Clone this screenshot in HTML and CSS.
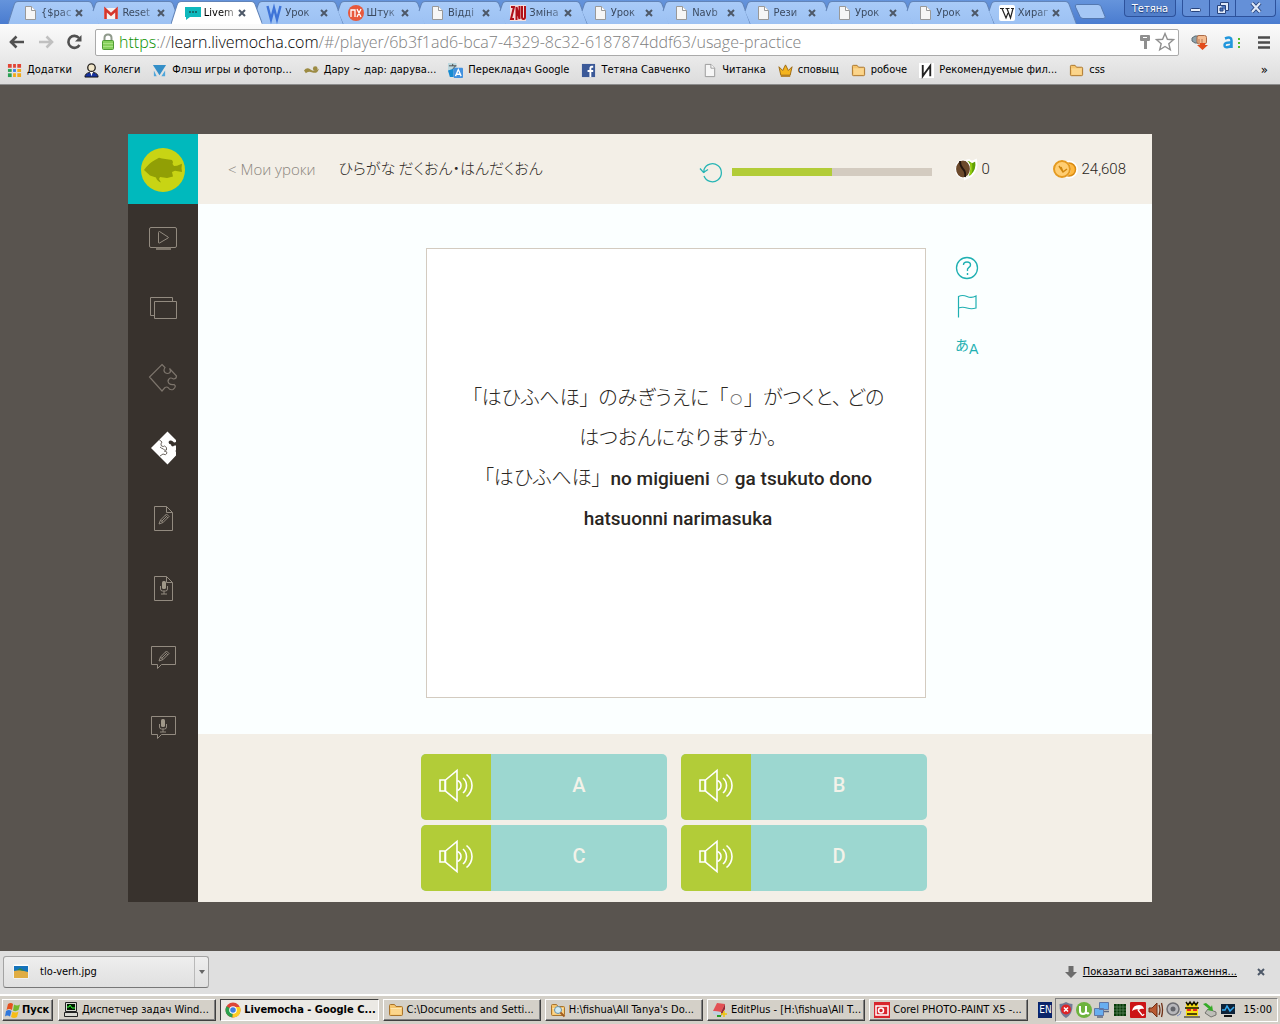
FILE: index.html
```html
<!DOCTYPE html>
<html lang="uk">
<head>
<meta charset="utf-8">
<title>Livemocha</title>
<link rel="stylesheet" href="styles.css">
</head>
<body>
<svg class="defs" width="0" height="0" aria-hidden="true">
  <defs>
    <linearGradient id="tabfill" x1="0" y1="0" x2="0" y2="1"><stop offset="0" stop-color="#a9cbf8"/><stop offset="1" stop-color="#9cc1f3"/></linearGradient>
    <symbol id="tab-first" viewBox="0 0 91 24" preserveAspectRatio="none"><path d="M0 24 L6 5 Q7 1.500 10 1.500 H80 Q83 1.500 84 5 L91 24Z" fill="url(#tabfill)"/><path d="M0 24 L6 5 Q7 1.500 10 1.500 H80 Q83 1.500 84 5 L91 24" fill="none" stroke="#6284b8"/></symbol>
    <symbol id="tab-next" viewBox="0 0 91 24" preserveAspectRatio="none"><path d="M9.500 24 L4 11 L6 5 Q7 1.500 10 1.500 H80 Q83 1.500 84 5 L91 24Z" fill="url(#tabfill)"/><path d="M4 11 L6 5 Q7 1.500 10 1.500 H80 Q83 1.500 84 5 L91 24" fill="none" stroke="#6284b8"/></symbol>
    <symbol id="tab-active" viewBox="0 0 91 24" preserveAspectRatio="none"><path d="M0 24 L6 5 Q7 1.500 10 1.500 H80 Q83 1.500 84 5 L91 24" fill="#fff" stroke="#6284b8"/></symbol>
    <symbol id="page" viewBox="0 0 16 16"><path d="M3.500 1.500h6l4 4v9h-10z" fill="#f6f6f6" stroke="#999"/><path d="M9.500 1.500v4h4" fill="#fff" stroke="#999"/></symbol>
    <symbol id="close" viewBox="0 0 8 8"><path d="M1 1l6 6M7 1l-6 6" stroke="#4d5868" stroke-width="2" fill="none"/></symbol>
    <symbol id="folder" viewBox="0 0 16 16"><path d="M1.500 3.500q0-1 1-1h4l1.500 2h5.500q1 0 1 1v7q0 1-1 1h-11q-1 0-1-1z" fill="#f6c56d" stroke="#a9742c"/><path d="M2.500 6.500h11" stroke="#ffe6ae"/><path d="M3 7h10.500v5.500H3z" fill="#fbd58c"/></symbol>
    <symbol id="speaker" viewBox="0 0 36 36"><g fill="none" stroke="#fff" stroke-width="1.600"><path d="M2 13h5v11H2zM7.500 13L19 3.500v30L7.500 24z"/><path d="M19.500 13.500q3.500 1.500 3.500 5t-3.500 5M25 11q3.500 3 3.500 7.500T25 26M28.500 7.500Q34 12 34 18.500T28.500 29.500"/></g></symbol>
    <symbol id="pencil" viewBox="0 0 12 12"><path d="M1 11l1.500-4 6-6 2.500 2.500-6 6zM2.500 7L5 9.500M7.500 2.500L10 5M3.500 8.500l5-5" fill="none" stroke="#938b80"/></symbol>
    <symbol id="mic" viewBox="0 0 12 14"><rect x="4" y="0" width="4" height="8" rx="1.500" fill="#a09889"/><path d="M2.500 5v3q0 2 2 2h3q2 0 2-2V5M6 10v3M3 13h6" fill="none" stroke="#938b80"/></symbol>
  </defs>
</svg>

<header class="chrome">
  <div class="titlebar">
    <div class="tabs">
      <div class="tab"><svg class="shape"><use href="#tab-first"/></svg><svg class="ico"><use href="#page"/></svg><button class="name">{$pac</button><button class="x" aria-label="Закрити"><svg><use href="#close"/></svg></button></div>
      <div class="tab"><svg class="shape"><use href="#tab-next"/></svg><svg class="ico" viewBox="0 0 16 16"><path d="M1 3h14v11H1z" fill="#f5f1ee"/><path d="M2.500 14V4.500L8 9.500l5.500-5V14" fill="none" stroke="#d5362c" stroke-width="2.600"/></svg><button class="name">Reset</button><button class="x" aria-label="Закрити"><svg><use href="#close"/></svg></button></div>
      <div class="tab active"><svg class="shape"><use href="#tab-active"/></svg><svg class="ico" viewBox="0 0 16 16"><path d="M0 2h16v10H5l-4 3v-3H0z" fill="#0fb9bd"/><path d="M4 7h2M7 7h2M10 7h2" stroke="#1a5458" stroke-width="1.500"/></svg><button class="name">Livem</button><button class="x" aria-label="Закрити"><svg><use href="#close"/></svg></button></div>
      <div class="tab"><svg class="shape"><use href="#tab-next"/></svg><svg class="ico" viewBox="0 0 16 16"><path d="M1.500 1L5 14.500 8 3l3 11.500L14.500 1" fill="none" stroke="#3f74d8" stroke-width="2.400"/></svg><button class="name">Урок</button><button class="x" aria-label="Закрити"><svg><use href="#close"/></svg></button></div>
      <div class="tab"><svg class="shape"><use href="#tab-next"/></svg><svg class="ico" viewBox="0 0 16 16"><circle cx="8" cy="8" r="8" fill="#e8583c"/><path d="M3 12V5h4v7M9 4l4 8M13 4l-4 8" fill="none" stroke="#fff" stroke-width="1.300"/></svg><button class="name">Штук</button><button class="x" aria-label="Закрити"><svg><use href="#close"/></svg></button></div>
      <div class="tab"><svg class="shape"><use href="#tab-next"/></svg><svg class="ico"><use href="#page"/></svg><button class="name">Відді</button><button class="x" aria-label="Закрити"><svg><use href="#close"/></svg></button></div>
      <div class="tab"><svg class="shape"><use href="#tab-next"/></svg><svg class="ico" viewBox="0 0 16 16"><path d="M0 0h16v16H0z" fill="#f3dede"/><path d="M1 2h3L1 14h3M6.500 15V2l3 12V1M12 1v11q0 2 1.500 2t1.500-2V1" fill="none" stroke="#b01019" stroke-width="2"/></svg><button class="name">Зміна</button><button class="x" aria-label="Закрити"><svg><use href="#close"/></svg></button></div>
      <div class="tab"><svg class="shape"><use href="#tab-next"/></svg><svg class="ico"><use href="#page"/></svg><button class="name">Урок</button><button class="x" aria-label="Закрити"><svg><use href="#close"/></svg></button></div>
      <div class="tab"><svg class="shape"><use href="#tab-next"/></svg><svg class="ico"><use href="#page"/></svg><button class="name">Navb</button><button class="x" aria-label="Закрити"><svg><use href="#close"/></svg></button></div>
      <div class="tab"><svg class="shape"><use href="#tab-next"/></svg><svg class="ico"><use href="#page"/></svg><button class="name">Рези</button><button class="x" aria-label="Закрити"><svg><use href="#close"/></svg></button></div>
      <div class="tab"><svg class="shape"><use href="#tab-next"/></svg><svg class="ico"><use href="#page"/></svg><button class="name">Урок</button><button class="x" aria-label="Закрити"><svg><use href="#close"/></svg></button></div>
      <div class="tab"><svg class="shape"><use href="#tab-next"/></svg><svg class="ico"><use href="#page"/></svg><button class="name">Урок</button><button class="x" aria-label="Закрити"><svg><use href="#close"/></svg></button></div>
      <div class="tab"><svg class="shape"><use href="#tab-next"/></svg><svg class="ico" viewBox="0 0 16 16"><rect width="16" height="16" rx="2" fill="#fff"/><path d="M1 3.500h4M6.500 3.500h4M12 3.500h3M3 3.500l4 9.500 2-5M8 3.500l3.500 9.500L14 3.500" fill="none" stroke="#222" stroke-width="1.200"/></svg><button class="name">Хираг</button><button class="x" aria-label="Закрити"><svg><use href="#close"/></svg></button></div>
    </div>
    <button class="newtab" aria-label="Нова вкладка"><svg width="32" height="16"><path d="M3 .5h21q2 0 3 2l4 10q1 2-2 2H9q-2 0-3-2L1.500 3q-1-2.500 1.500-2.500z" fill="#a5c7f5" stroke="#5478b0"/></svg></button>
    <button class="user">Тетяна</button>
    <div class="winbtns">
      <button aria-label="Згорнути"><svg width="14" height="14"><rect x="1.500" y="7.500" width="10" height="3" rx="1" fill="#e8effa" stroke="#27437c"/></svg></button>
      <button aria-label="Розгорнути"><svg width="14" height="14"><path d="M4.500 1.500h8v8h-3v3h-8v-8h3z" fill="#dfe9f8" stroke="#27437c"/><path d="M4.500 4.500h5v5M4 7h3v3H4z" fill="#4b76c2" stroke="#27437c"/></svg></button>
      <button class="wide" aria-label="Закрити вікно"><svg width="14" height="14"><path d="M3 2l8 9M11 2L3 11" stroke="#27437c" stroke-width="4"/><path d="M3 2l8 9M11 2L3 11" stroke="#dfe9f8" stroke-width="2.200"/></svg></button>
    </div>
  </div>

  <div class="toolbar">
    <button aria-label="Назад"><svg width="18" height="16"><path d="M2 8h14M8.500 2.500L3 8l5.500 5.500" fill="none" stroke="#505050" stroke-width="2.600"/></svg></button>
    <button aria-label="Вперед"><svg width="18" height="16"><path d="M2 8h13M9.500 2.500L15 8l-5.500 5.500" fill="none" stroke="#c0c0c0" stroke-width="2.600"/></svg></button>
    <button aria-label="Оновити"><svg width="18" height="16"><path d="M13.500 11A6 6 0 1 1 13 4" fill="none" stroke="#505050" stroke-width="2.600"/><path d="M15.500 1v6.500H9z" fill="#505050"/></svg></button>
    <div class="omnibox">
      <svg width="14" height="18"><path d="M3.500 8V5q0-3.500 3.500-3.500T10.500 5v3" fill="none" stroke="#8f9a8b" stroke-width="2"/><rect x="1.500" y="7.500" width="11" height="9" rx="1" fill="#86d05c" stroke="#4f9a35"/><path d="M2 10.500h10M2 13.500h10" stroke="#a8e283"/></svg>
      <div class="url" role="textbox" contenteditable="true" spellcheck="false" aria-label="Адреса"><span class="scheme">https</span>://<span class="host">learn.livemocha.com</span>/#/player/6b3f1ad6-bca7-4329-8c32-6187874ddf63/usage-practice</div>
      <svg width="12" height="16"><path d="M2 1h8q1 0 1 1v4q0 1-1 1H8v8H5V7H2Q1 7 1 6V2q0-1 1-1z" fill="#8f8f8f"/><path d="M4 3.500h4" stroke="#fff"/></svg>
      <svg width="20" height="20"><path d="M10 1.500l2.400 5.800 6.100.4-4.700 4 1.500 6.100-5.300-3.300-5.300 3.300 1.500-6.100-4.700-4 6.100-.4z" fill="#fff" stroke="#8f8f8f" stroke-width="1.400"/></svg>
    </div>
    <button class="ext" aria-label="Завантажувач"><svg width="18" height="16"><path d="M1 4l3-2h5v7H4L1 7z" fill="#8da2ab" stroke="#5d6c74"/><rect x="6" y="1.500" width="9.500" height="8.500" rx="2" fill="#f5bd92" stroke="#aa6b48"/><path d="M8 5v4M11 5v4" stroke="#b97853"/><path d="M9 9h5v2h3l-5.500 5L6 11h3z" fill="#e24c1c"/></svg></button>
    <button class="ext" aria-label="Словник"><svg width="20" height="16"><path d="M3 4.500Q9.500 2 9.500 6.500V14M9.500 8.500Q2.500 8 2.500 11t3.500 2q3.500 0 3.500-3" fill="none" stroke="#2196dc" stroke-width="2.500"/><path d="M16 4h2v2h-2zM16 8h2v2h-2zM16 12h2v2h-2z" fill="#52bd2d"/></svg></button>
    <button class="ext" aria-label="Меню"><svg width="14" height="14"><path d="M1 2.500h12M1 7.500h12M1 12.500h12" stroke="#4b4b4b" stroke-width="2.600"/></svg></button>
  </div>

  <nav class="bookmarks">
    <a href="#"><svg viewBox="0 0 16 16"><path d="M1 1h4v4H1zM6.500 1h3v4h-3zM11 1h4v4h-4z" fill="#e24435"/><path d="M1 6.500h4v3H1z" fill="#2aa053"/><path d="M6.500 6.500h3v3h-3z" fill="#397bea"/><path d="M11 6.500h4v3h-4zM6.500 11h3v4h-3zM11 11h4v4h-4z" fill="#f0a91a"/><path d="M1 11h4v4H1z" fill="#2aa053"/></svg>Додатки</a>
    <a href="#"><svg viewBox="0 0 16 16"><path d="M1 15q0-4 5-5l2 2 2-2q5 1 5 5z" fill="#1632a0" stroke="#111"/><circle cx="8" cy="5" r="4" fill="#f1e6c9" stroke="#27231f" stroke-width="1.400"/><path d="M6.500 9.500h3L8 14z" fill="#fff"/></svg>Колєги</a>
    <a href="#"><svg viewBox="0 0 16 16"><path d="M1 2h14L8 13z" fill="#348fc8"/><path d="M2 8v6h3zM14 8v6h-4z" fill="#4fa6da"/></svg>Флэш игры и фотопр...</a>
    <a href="#"><svg viewBox="0 0 16 16"><path d="M0 8q3-4 7-1t9-1q-2 6-7 4T2 11z" fill="#9c8b43"/><circle cx="12" cy="6" r="2.500" fill="#9c8b43"/></svg>Дару ~ дар: дарува...</a>
    <a href="#"><svg viewBox="0 0 16 16"><rect width="9" height="10" fill="#bdd8df"/><path d="M1 3h8M5 1v2M3 9l5-6" stroke="#444"/><path d="M0 8l6-2v9H2z" fill="#168ad1"/><rect x="6" y="5" width="10" height="11" rx="1" fill="#4291df"/><path d="M8 14l3-7 3 7M9 12h4" fill="none" stroke="#fff" stroke-width="1.400"/></svg>Перекладач Google</a>
    <a href="#"><svg viewBox="0 0 16 16"><rect x="1" y="1" width="14" height="14" fill="#3b5998"/><path d="M13 4h-1.500Q10 4 10 6v9M7 8.500h6" fill="none" stroke="#fff" stroke-width="2"/></svg>Тетяна Савченко</a>
    <a href="#"><svg><use href="#page"/></svg>Читанка</a>
    <a href="#"><svg viewBox="0 0 16 16"><path d="M1 4l4 4 3-6 3 6 4-4-2 9H3z" fill="#f4b41c" stroke="#9b6811"/><path d="M3 14h10" stroke="#b07611" stroke-width="1.500"/></svg>сповыщ</a>
    <a href="#"><svg><use href="#folder"/></svg>робоче</a>
    <a href="#"><svg viewBox="0 0 16 16"><rect width="16" height="16" fill="#fff"/><path d="M4 2v12l8-11v11" fill="none" stroke="#222" stroke-width="2"/></svg>Рекомендуемые фил...</a>
    <a href="#"><svg><use href="#folder"/></svg>css</a>
    <button class="more" aria-label="Інші закладки">»</button>
  </nav>
</header>

<main class="viewport">
  <div class="player">
    <nav class="side">
      <a class="avatar" href="#" aria-label="Профіль"><svg width="44" height="44"><circle cx="22" cy="22" r="22" fill="#c8d414"/><path d="M3 22Q8 15 14 12L18 9.700 21 10.500 26 11.300 31 12 32 14 31.500 16 33 18 36 17.700 41 15.700 40.500 20 41 24 34 22.700 31 24 32 28.500 26 30 19 29 18 31 20 34.500Q16 33 15 29.500L9 27.500z" fill="#919f05"/></svg></a>
      <a href="#" aria-label="Відео"><svg width="30" height="26"><g fill="none" stroke="#938b80"><rect x="1.500" y="2.500" width="27" height="20" rx="1.500"/><path d="M10.500 7.500q0-1 1-1l8.500 5.500q1 .5 0 1L11.500 18q-1 .5-1-1z"/></g><path d="M8 22.500h15v2.500H8z" fill="#7d756b"/></svg></a>
      <a href="#" aria-label="Картки"><svg width="30" height="26"><path d="M6.500 20.500h-4v-18h22v4M6.500 6.500h22v17h-22z" fill="none" stroke="#938b80"/></svg></a>
      <a href="#" aria-label="Вправа"><svg width="30" height="30"><path d="M14 1.500l3 3q-2 3 0 5 2.500 2 5 0 1-2-.5-4l7 7.500q0 3-3 3-3-2-4.500 0-2 2 0 4.500 2 1.500 5 1 3 2-1 5-3 1-5-2-1-1-3 0L14 28 1.500 14z" fill="none" stroke="#7d756c" stroke-width="1.200"/></svg></a>
      <a href="#" aria-label="Практика" aria-current="page"><svg width="24" height="34"><path d="M0 17L16.500.5 25 9v2q-2 1-3-.5-3-2-4.500.5 0 2 2.500 2.500 0 2 2 2 1-1.500 3-1v4.500q-1 1 0 2v3.500L16.500 33.500z" fill="#fff"/><path d="M8 8.500l3 2.500q-2 2-.5 4 2 1 3 0 3 1 2 4-2 1-3-1-2-.5-3.500-2M9 25l3-2q3 2 4-1 0-2-3-2" fill="none" stroke="#6b655f"/></svg></a>
      <a href="#" aria-label="Письмо"><svg width="18" height="26"><path d="M.5 1.500h12l6 6v18H.5zM12.500 1.500v6h6" fill="none" stroke="#938b80"/><use href="#pencil" x="4" y="8" width="12" height="12"/></svg></a>
      <a href="#" aria-label="Мовлення"><svg width="18" height="26"><path d="M.5 1.500h12l6 6v18H.5zM12.500 1.500v6h6" fill="none" stroke="#938b80"/><use href="#mic" x="4" y="6" width="12" height="14"/></svg></a>
      <a href="#" aria-label="Письмовий відгук"><svg width="24" height="26"><path d="M.5 1.500h24v18H10.500l-4 4v-4h-6z" fill="none" stroke="#938b80"/><use href="#pencil" x="7" y="5" width="12" height="12"/></svg></a>
      <a href="#" aria-label="Усний відгук"><svg width="24" height="26"><path d="M.5 1.500h24v18H10.500l-4 4v-4h-6z" fill="none" stroke="#938b80"/><use href="#mic" x="6" y="4" width="12" height="14"/></svg></a>
    </nav>

    <div class="lesson">
      <div class="lessonbar">
        <a class="back" href="#">&lt; Мои уроки</a>
        <h1 lang="ja">ひらがな だくおん・はんだくおん</h1>
        <button class="restart" aria-label="Почати знову"><svg width="24" height="22"><path d="M5 15A9 9 0 1 0 5 8.500V12M1 7.500l3.500 4L9 8.500" fill="none" stroke="#27b5b5" stroke-width="1.300"/></svg></button>
        <div class="progress" role="progressbar" aria-valuenow="50"><div class="done" style="width:50%"></div></div>
        <div class="beans"><svg width="24" height="22"><path d="M11 3l4-1 3 2 4-2q2 10-5 16l-6 3z" fill="#5fa004" stroke="#fff" stroke-width="2"/><ellipse cx="9" cy="11" rx="7.500" ry="9" fill="#6c4a2c" stroke="#fff" stroke-width="1.200"/><path d="M6 3q0 5 3 8t2 8" fill="none" stroke="#24160e" stroke-width="1.800"/><path d="M17 5q1 7-1 12" stroke="#92ca0e" stroke-width="2" fill="none"/></svg>0</div>
        <div class="coins"><svg width="26" height="22"><circle cx="17" cy="11.500" r="7.500" fill="#f2a52b" stroke="#fff" stroke-width="3"/><circle cx="17" cy="11.500" r="6.500" fill="#ffb83f" stroke="#d98b13" stroke-width="1.500"/><circle cx="10" cy="11" r="9" fill="#fff"/><circle cx="10" cy="11" r="8" fill="#ffce73" stroke="#e49a20" stroke-width="2"/><path d="M7 8l4 6 4-3M11 14l-2-5" stroke="#cf860e" fill="none" stroke-width="1.500"/></svg>24,608</div>
      </div>

      <div class="stage">
        <div class="card">
          <p lang="ja">「はひふへほ」&nbsp; のみぎうえに &nbsp;「<span class="ring">○</span>」&nbsp; がつくと、&nbsp;どの<br>はつおんになりますか。<br>「はひふへほ」&nbsp; <b>no migiueni</b> <span class="ring">○</span> <b>ga tsukuto dono</b><br><b>hatsuonni narimasuka</b></p>
        </div>
        <div class="tools">
          <button aria-label="Довідка"><svg width="24" height="24"><circle cx="12" cy="12" r="10.500" fill="none" stroke="#1fb0b2" stroke-width="1.300"/><path d="M8.500 9q0-3 3.500-3t3.500 3q0 1.500-1.800 2.700T12.500 15M12.500 17v2" fill="none" stroke="#1fb0b2" stroke-width="1.400"/></svg></button>
          <button aria-label="Поскаржитися"><svg width="24" height="24"><path d="M3.500 23.500v-21q4-2 8.500 0t9-.500v12q-4.500 1.500-9 0t-8.500 0" fill="none" stroke="#1fb0b2" stroke-width="1.200"/></svg></button>
          <button class="lang" lang="ja" aria-label="Мова">あ<sub>A</sub></button>
        </div>
      </div>

      <div class="answers">
        <div class="answer"><button class="play" aria-label="Прослухати A"><svg><use href="#speaker"/></svg></button><button class="pick">A</button></div>
        <div class="answer"><button class="play" aria-label="Прослухати B"><svg><use href="#speaker"/></svg></button><button class="pick">B</button></div>
        <div class="answer"><button class="play" aria-label="Прослухати C"><svg><use href="#speaker"/></svg></button><button class="pick">C</button></div>
        <div class="answer"><button class="play" aria-label="Прослухати D"><svg><use href="#speaker"/></svg></button><button class="pick">D</button></div>
      </div>
    </div>
  </div>
</main>

<section class="downloads">
  <div class="file">
    <button class="filename"><svg width="16" height="16"><path d="M.5.500h15v14H.5z" fill="#fff"/><path d="M1 2h14v6H1z" fill="#1573bb"/><path d="M1 7l6-1 8 2v6H1z" fill="#e0ad43"/><path d="M4 6l3-2 5 3z" fill="#2c8450"/></svg>tlo-verh.jpg</button>
    <button class="arrow" aria-label="Дії"><svg width="6" height="4"><path d="M0 0h6L3 4z" fill="#666"/></svg></button>
  </div>
  <svg class="down" width="12" height="12"><path d="M3.500 0h5v6H12l-6 6-6-6h3.500z" fill="#6c6c6c"/></svg>
  <a href="#">Показати всі завантаження...</a>
  <button class="x" aria-label="Закрити"><svg><use href="#close"/></svg></button>
</section>

<footer class="taskbar">
  <button class="start"><svg width="16" height="16"><path d="M3 2q3-2 5 0L7 8Q4 6 1.500 8z" fill="#e5521f"/><path d="M9 2.500q3 2 6 0L13.500 8q-3 2-5.500.5z" fill="#74b82d"/><path d="M1 9q3-2 5.500 0L5 14.500q-3-2-5 0z" fill="#2f78dc"/><path d="M7.500 9.500q3 2 6 0L12 15q-3 2-6 0z" fill="#f6bd17"/></svg>Пуск</button>
  <div class="tasks">
    <button><svg viewBox="0 0 16 16"><path d="M2.500.5h11v9h-11zM1.500 10.500h13v4h-13z" fill="#d9d9d2" stroke="#222"/><path d="M4 2h8v6H4z" fill="#001a00"/><path d="M4 5h2l1-2 2 3h3" fill="none" stroke="#3f3"/></svg><span>Диспетчер задач Wind...</span></button>
    <button class="pressed"><svg viewBox="0 0 16 16"><circle cx="8" cy="8" r="7.500" fill="#dd4637"/><path d="M8 8L1.500 4.200A7.500 7.500 0 0 0 7.500 15.500z" fill="#2ba14d"/><path d="M8 8L7.500 15.500A7.500 7.500 0 0 0 15 5H8z" fill="#fccd23"/><circle cx="8" cy="8" r="3.800" fill="#fff"/><circle cx="8" cy="8" r="2.800" fill="#3d7de0"/></svg><span>Livemocha - Google C...</span></button>
    <button><svg><use href="#folder"/></svg><span>C:\Documents and Setti...</span></button>
    <button><svg viewBox="0 0 16 16"><use href="#folder" width="16" height="16"/><circle cx="8" cy="8" r="3.500" fill="#cfeaf5" stroke="#6b91a4"/><path d="M10.500 10.500l4 4" stroke="#a35d20" stroke-width="2"/></svg><span>H:\fishua\All Tanya's Do...</span></button>
    <button><svg viewBox="0 0 16 16"><path d="M5 1l8 1-4 8-8-1z" fill="#e35054"/><path d="M1 9l8 1-1 4-7-2z" fill="#c1d0df"/><path d="M13 2v5l-4 7v-4z" fill="#9c2634"/><path d="M9 12h6M12 9v6" stroke="#eec40b" stroke-width="1.500"/><path d="M5 14h4" stroke="#279c28" stroke-width="2"/></svg><span>EditPlus - [H:\fishua\All T...</span></button>
    <button><svg viewBox="0 0 16 16"><rect width="16" height="16" fill="#d8252c"/><path d="M2 4h12v9H2z" fill="none" stroke="#fff" stroke-width="1.500"/><circle cx="7" cy="8.500" r="2.500" fill="none" stroke="#fff" stroke-width="1.500"/></svg><span>Corel PHOTO-PAINT X5 -...</span></button>
  </div>
  <button class="kbd">EN</button>
  <div class="tray">
    <svg viewBox="0 0 16 16"><path d="M8 0q3 2 6.500 2Q15 12 8 16 1 12 1.500 2 5 2 8 0z" fill="#737b96"/><circle cx="8" cy="7.500" r="5" fill="#dd2427"/><path d="M6 5.500l4 4M10 5.500l-4 4" stroke="#fff" stroke-width="1.500"/></svg>
    <svg viewBox="0 0 16 16"><circle cx="8" cy="8" r="8" fill="#6db33d"/><path d="M4 4v5q0 3 3 3t3-3V4M10 10q1 2 3 1" fill="none" stroke="#fff" stroke-width="2"/></svg>
    <svg viewBox="0 0 16 16"><path d="M5.500.5h9v7h-9zM.5 6.500h9v7h-9z" fill="#68aef0" stroke="#6177a5"/><path d="M3 15h6M10 9.500h5" stroke="#5c6880" stroke-width="1.500"/></svg>
    <svg viewBox="0 0 16 16"><path d="M2 2h12v12H2z" fill="#063b08"/><path d="M5 2v12M8 2v12M11 2v12M2 5h12M2 8h12M2 11h12" stroke="#668a66" stroke-width=".7"/></svg>
    <svg viewBox="0 0 16 16"><rect width="16" height="16" rx="1" fill="#cc1416"/><path d="M2 9q1-6 7-6 4 0 5 4-3-1-5 1-3-2-7 1z" fill="#fff"/><path d="M8 8l4 5q1 1 2-1" fill="none" stroke="#fff" stroke-width="1.300"/></svg>
    <svg viewBox="0 0 16 16"><path d="M1 6h3l5-5v14l-5-5H1z" fill="#b95931" stroke="#703016"/><path d="M11 3q2 5 0 10M13.500 1q2 7 0 14" fill="none" stroke="#703016" stroke-width="1.300"/></svg>
    <svg viewBox="0 0 16 16"><circle cx="7" cy="7" r="6" fill="#b7b7bb" stroke="#6d6d72" stroke-width="1.500"/><circle cx="7" cy="7" r="2.500" fill="#63646a"/><path d="M11 14q4-1 4-5" fill="none" stroke="#7c8ec3"/></svg>
    <svg viewBox="0 0 16 16"><path d="M2 0l2 2 2-2 2 2 2-2 2 2 2-2v14H2z" fill="#f5dd13"/><path d="M2 0l2 3 2-3 2 3 2-3 2 3 2-3M1 6h14M3 12h10" fill="none" stroke="#171500" stroke-width="1.500"/><path d="M3 7h4v2H3zM9 7h4v2H9z" fill="#e22"/><path d="M0 15h16" stroke="#171500"/></svg>
    <svg viewBox="0 0 16 16"><path d="M6 7l8 3v3l-5 2-6-4z" fill="#bebeb8" stroke="#73736e"/><path d="M1 2l3-1 5 4 1-2 1 6-6-1 2-1z" fill="#34ab26"/></svg>
    <svg viewBox="0 0 16 16"><path d="M1 2h14v10H1z" fill="#0e2237"/><path d="M2 8h3l2-4 3 5 4-4" fill="none" stroke="#36a9ee" stroke-width="1.500"/><path d="M4 14h8" stroke="#111" stroke-width="2"/></svg>
    <time>15:00</time>
  </div>
</footer>
</body>
</html>
```
FILE: styles.css
```css
* { box-sizing: border-box; }
body {
  margin: 0;
  min-height: 100vh;
  display: flex;
  flex-direction: column;
  font: 11px/16px "DejaVu Sans Condensed", "DejaVu Sans", sans-serif;
  color: #000;
  background: #59544f;
}
button { margin: 0; padding: 0; border: 0; background: none; font: inherit; color: inherit; }
a { color: inherit; text-decoration: none; }
svg { display: block; flex: none; overflow: visible; }
.defs { position: absolute; }

/* browser window */
.chrome { background: linear-gradient(#fbfbfb 24px, #dcdcdc); border-bottom: 1px solid #8c8c8c; }
.titlebar { display: flex; height: 24px; padding-left: 8px; background: linear-gradient(#6594dc, #4a7cd0); }
.tabs { flex: 1; display: flex; min-width: 0; }
.tab { position: relative; flex: 1 1 0; min-width: 0; display: flex; align-items: center; padding: 2px 6px 0 14px; color: #3b4a60; }
.tab .shape { position: absolute; left: 0; top: 0; width: calc(100% + 10px); height: 24px; }
.tab.active { z-index: 1; color: #000; }
.tab .ico { position: relative; width: 16px; height: 16px; }
.tab .name { position: relative; flex: 1; min-width: 0; padding-left: 3px; white-space: nowrap; text-align: left; -webkit-mask: linear-gradient(90deg, #000 60%, rgba(0, 0, 0, .3) 100%); mask: linear-gradient(90deg, #000 60%, rgba(0, 0, 0, .3) 100%); }
.x { position: relative; padding-left: 2px; }
.x svg { width: 8px; height: 8px; }
.newtab { padding: 0 0 0 8px; }
.user { align-self: flex-start; width: 52px; height: 17px; margin-left: 18px; border: 1px solid #2d529c; border-top: 0; border-radius: 0 0 4px 4px; color: #fff; line-height: 15px; background: #527fca; text-shadow: 0 1px 1px #18336c; }
.winbtns { display: flex; align-self: flex-start; height: 17px; margin: 0 4px 0 6px; border: 1px solid #2d529c; border-top: 0; border-radius: 0 0 4px 4px; background: #6490d8; }
.winbtns button { width: 26px; display: flex; justify-content: center; align-items: center; }
.winbtns button + button { border-left: 1px solid #2d529c; }
.winbtns .wide { width: 40px; }

.toolbar { display: flex; align-items: center; height: 36px; padding: 0 6px 0 8px; gap: 11px; }
.omnibox { flex: 1; min-width: 0; display: flex; align-items: center; gap: 4px; height: 27px; padding: 0 3px 0 5px; border: 1px solid #aaa; border-radius: 2px; background: #fff; }
.url { flex: 1; min-width: 0; white-space: nowrap; font: 300 16px/24px "Open Sans", sans-serif; color: #808080; outline: 0; }
.scheme { color: #0a9100; }
.host { color: #000; }
.ext { width: 20px; display: flex; justify-content: center; }
.toolbar .ext + .ext { margin-left: 1px; }

.bookmarks { display: flex; align-items: center; height: 24px; padding: 0 12px 4px 7px; gap: 12px; }
.bookmarks a { display: flex; align-items: center; gap: 5px; white-space: nowrap; }
.bookmarks svg { width: 15px; height: 15px; }
.more { margin-left: auto; font-size: 13px; }

/* lesson player */
.viewport { flex: 1; display: flex; justify-content: center; align-items: center; padding: 24px 0; background: #59544f; }
.player { width: 80%; display: flex; background: #f3efe7; font-family: "Open Sans", "Noto Sans CJK JP", sans-serif; color: #2a2622; }
.side { flex: none; width: 70px; background: #38322d; }
.side a { height: 70px; display: flex; justify-content: center; align-items: center; padding-bottom: 2px; }
.side .avatar { padding: 2px 0 0; background: #00b9bd; }
.lesson { flex: 1; min-width: 0; display: flex; flex-direction: column; }
.lessonbar { display: flex; align-items: center; height: 70px; padding: 0 26px 0 30px; font: 300 15px/20px Roboto, sans-serif; }
.back { font: 300 15px/24px "Open Sans", sans-serif; color: #8a857d; }
h1 { flex: 1; margin: 0 0 0 23px; padding-bottom: 3px; font: 300 15px/24px "Noto Sans CJK JP", sans-serif; font-feature-settings: "palt"; white-space: nowrap; }
.restart { padding-top: 6px; }
.progress { width: 200px; height: 8px; margin: 6px 22px 0 9px; background: #d3cbc0; }
.done { height: 100%; background: #b2cc38; }
.beans, .coins { display: flex; align-items: center; gap: 4px; }
.beans { width: 98px; }

.stage { flex: 1; display: grid; grid-template-columns: 1fr 500px 1fr; padding: 44px 0 36px 2px; background: #fbffff; }
.card { grid-column: 2; height: 450px; padding: 128px 0 0 4px; border: 1px solid #d3cbc0; background: #fff; }
.card p { margin: 0; text-align: center; font: 300 20px/40px "Noto Sans CJK JP", sans-serif; font-feature-settings: "palt"; }
.card b { font: 500 19px/20px Roboto, "Liberation Sans", sans-serif; }
.ring { font: 14px/20px "DejaVu Sans", sans-serif; padding: 0 2px; vertical-align: 2px; color: #666; }
.tools { display: flex; flex-direction: column; align-items: flex-start; gap: 14px; padding: 8px 0 0 29px; color: #1fb0b2; }
.tools button { height: 24px; }
.lang { display: flex; align-items: center; font: 14px/20px "Noto Sans CJK JP", sans-serif; }
.lang sub { font: 14px/14px "Liberation Sans", sans-serif; align-self: flex-end; }

.answers { display: grid; grid-template-columns: 246px 246px; justify-content: center; gap: 5px 14px; padding: 20px 2px 11px 0; }
.answer { display: flex; height: 66px; border-radius: 5px; overflow: hidden; background: #9cd7d0; }
.play { width: 70px; display: flex; justify-content: center; align-items: center; padding-bottom: 4px; background: #b2cc38; }
.play svg { width: 36px; height: 36px; }
.pick { flex: 1; font: 500 20px/24px Roboto, "Liberation Sans", sans-serif; color: #f3f2e9; padding-bottom: 4px; }

/* download shelf */
.downloads { display: flex; align-items: center; height: 43px; padding: 0 15px 2px 3px; background: #dfdfdf; }
.file { display: flex; height: 32px; margin-right: auto; border: 1px solid #a3a3a3; border-bottom-color: #777; border-radius: 3px; background: linear-gradient(#eee, #e0e0e0); }
.filename { display: flex; align-items: center; gap: 11px; width: 191px; padding-left: 9px; border-right: 1px solid #b9b9b9; }
.arrow { width: 13px; display: flex; justify-content: center; align-items: center; }
.down { margin-right: 6px; }
.downloads a { text-decoration: underline; }
.downloads .x { padding-left: 20px; }

/* system taskbar */
.taskbar { display: flex; align-items: center; height: 30px; padding: 2px; border-top: 2px solid #fff; background: #d4d0c8; }
.start, .tasks button { display: flex; align-items: center; height: 22px; border: 1px solid; border-color: #fff #404040 #404040 #fff; box-shadow: inset -1px -1px #808080; background: #d4d0c8; }
.start { width: 51px; gap: 1px; padding-left: 2px; font-weight: bold; }
.tasks { flex: 1; min-width: 0; display: flex; gap: 4px; padding: 0 11px 0 5px; }
.tasks button { flex: 1 1 0; min-width: 0; gap: 3px; padding: 0 0 0 4px; text-align: left; }
.tasks svg, .tray svg { width: 16px; height: 16px; }
.tasks span { white-space: nowrap; }
.tasks .pressed { border-color: #404040 #fff #fff #404040; box-shadow: none; background: #ebe9e4; font-weight: bold; }
.kbd { width: 14px; height: 16px; font-size: 10px; background: #0a246a; color: #fff; }
.tray { display: flex; align-items: center; gap: 2px; height: 24px; margin-left: 3px; padding: 0 5px 0 2px; border: 1px solid; border-color: #808080 #fff #fff #808080; }
.tray time { padding-left: 5px; }
```
